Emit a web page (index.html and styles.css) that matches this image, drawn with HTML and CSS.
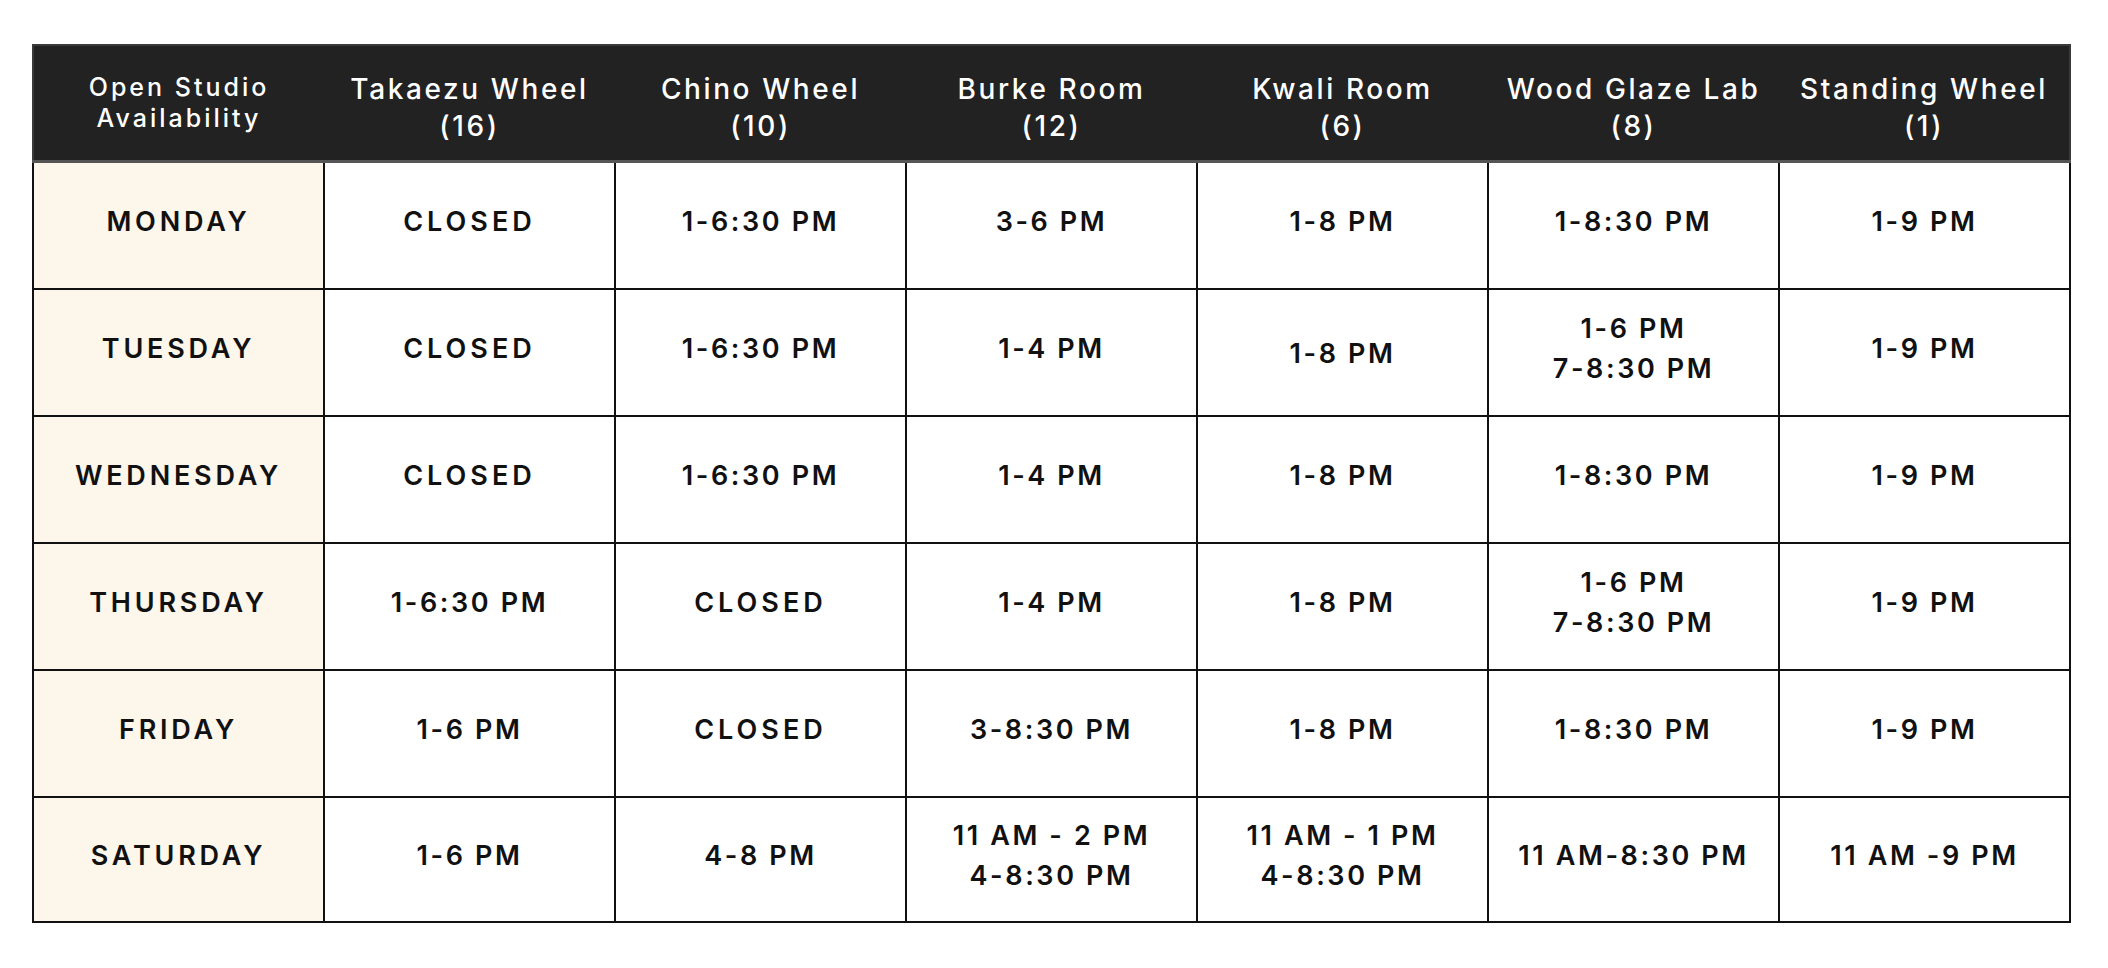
FILE: index.html
```html
<!DOCTYPE html>
<html lang="en">
<head>
<meta charset="utf-8">
<title>Open Studio Availability</title>
<link rel="stylesheet" href="styles.css">
</head>
<body>
<main class="page">
<table class="schedule">
  <thead>
    <tr>
      <th class="corner">Open Studio<br>Availability</th>
      <th>Takaezu Wheel<br>(16)</th>
      <th>Chino Wheel<br>(10)</th>
      <th>Burke Room<br>(12)</th>
      <th>Kwali Room<br>(6)</th>
      <th>Wood Glaze Lab<br>(8)</th>
      <th>Standing Wheel<br>(1)</th>
    </tr>
  </thead>
  <tbody>
    <tr>
      <td class="day">MONDAY</td>
      <td class="word">CLOSED</td>
      <td>1-6:30 PM</td>
      <td>3-6 PM</td>
      <td>1-8 PM</td>
      <td>1-8:30 PM</td>
      <td>1-9 PM</td>
    </tr>
    <tr>
      <td class="day">TUESDAY</td>
      <td class="word">CLOSED</td>
      <td>1-6:30 PM</td>
      <td>1-4 PM</td>
      <td class="low">1-8 PM</td>
      <td>1-6 PM<br>7-8:30 PM</td>
      <td>1-9 PM</td>
    </tr>
    <tr>
      <td class="day">WEDNESDAY</td>
      <td class="word">CLOSED</td>
      <td>1-6:30 PM</td>
      <td>1-4 PM</td>
      <td>1-8 PM</td>
      <td>1-8:30 PM</td>
      <td>1-9 PM</td>
    </tr>
    <tr>
      <td class="day">THURSDAY</td>
      <td>1-6:30 PM</td>
      <td class="word">CLOSED</td>
      <td>1-4 PM</td>
      <td>1-8 PM</td>
      <td>1-6 PM<br>7-8:30 PM</td>
      <td>1-9 PM</td>
    </tr>
    <tr>
      <td class="day">FRIDAY</td>
      <td>1-6 PM</td>
      <td class="word">CLOSED</td>
      <td>3-8:30 PM</td>
      <td>1-8 PM</td>
      <td>1-8:30 PM</td>
      <td>1-9 PM</td>
    </tr>
    <tr class="last">
      <td class="day">SATURDAY</td>
      <td>1-6 PM</td>
      <td>4-8 PM</td>
      <td>11 AM - 2 PM<br>4-8:30 PM</td>
      <td>11 AM - 1 PM<br>4-8:30 PM</td>
      <td>11 AM-8:30 PM</td>
      <td>11 AM -9 PM</td>
    </tr>
  </tbody>
</table>
</main>
</body>
</html>
```
FILE: styles.css
```css
html, body {
  margin: 0;
  padding: 0;
  background: #ffffff;
}

.page {
  padding: 44px 37px 0 32px;
}

.schedule {
  width: 2039px;
  border-collapse: collapse;
  table-layout: fixed;
  font-family: Inter, "Noto Sans", sans-serif;
  color: #111111;
  border: 2px solid #3a3a3a;
}

.schedule th {
  background: #222222;
  color: #ffffff;
  font-weight: 500;
  font-size: 28px;
  line-height: 37px;
  letter-spacing: 2.6px;
  height: 104px;
  padding: 10px 0 0 0;
  text-align: center;
  vertical-align: middle;
  border-bottom: 3px solid #555555;
}

.schedule th.corner {
  font-size: 25px;
  line-height: 31px;
  letter-spacing: 3px;
  height: 114px;
  padding: 0;
}

.schedule td {
  height: 117px;
  padding: 0 0 8px 0;
  text-align: center;
  vertical-align: middle;
  font-weight: 600;
  font-size: 27px;
  line-height: 40px;
  letter-spacing: 2.6px;
  border: 2px solid #111111;
  background: #ffffff;
}

.schedule td.word {
  letter-spacing: 4px;
}

.schedule td.day {
  background: #fdf6ea;
  letter-spacing: 3.8px;
}

.schedule td.low {
  height: 123px;
  padding: 2px 0 0 0;
}

.schedule tr.last td {
  height: 115px;
}
```
